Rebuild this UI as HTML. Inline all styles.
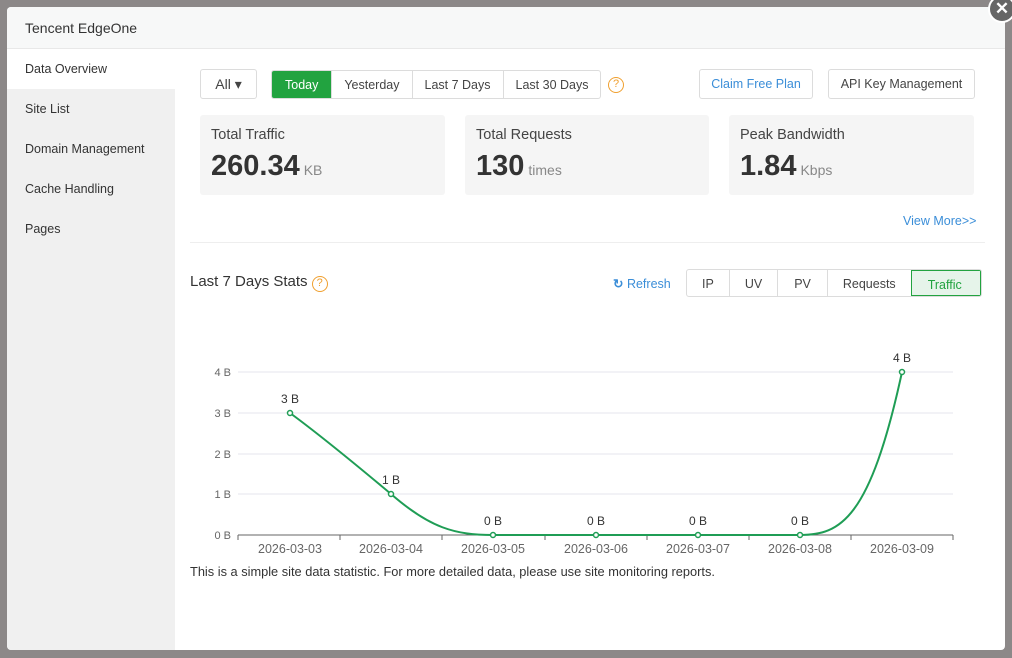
<!DOCTYPE html>
<html><head><meta charset="utf-8"><style>
*{box-sizing:border-box;margin:0;padding:0}
body{width:1012px;height:658px;background:#8c8888;font-family:"Liberation Sans",sans-serif;position:relative;overflow:hidden;color:#333}
.modal{position:absolute;left:7px;top:7px;width:998px;height:643px;background:#fff;border-radius:4px;overflow:hidden}
.hdr{height:42px;background:#f7f8f8;border-bottom:1px solid #e8e8e8;font-size:14px;padding:13px 18px;color:#333}
.side{position:absolute;left:0;top:42px;width:168px;bottom:0;background:#f0f0f0}
.side div{height:40px;line-height:40px;padding-left:18px;font-size:12.5px;color:#333}
.side .act{background:#fff}
.btn{position:absolute;height:30px;border:1px solid #dcdcdc;border-radius:3px;font-size:12.5px;line-height:28px;text-align:center;background:#fff;color:#444}
.seg{position:absolute;display:flex;border:1px solid #dcdcdc;border-radius:3px;height:30px;overflow:hidden}
.seg div{font-size:12.5px;line-height:28px;padding:0 12px;border-left:1px solid #dcdcdc;color:#444}
.seg div:first-child{border-left:none}
.card{position:absolute;top:115px;height:80px;background:#f5f5f5;border-radius:3px;padding:12px 11px}
.card .t{font-size:14.5px;color:#444}
.card .v{font-size:29px;font-weight:bold;color:#333;margin-top:7px}
.card .v span{font-size:14px;font-weight:normal;color:#888;margin-left:4px}
.q{display:inline-block;width:16px;height:16px;border:1.3px solid #f0a030;border-radius:50%;color:#f0a030;font-size:11px;text-align:center;line-height:13px}
</style></head><body>
<div class="modal">
<div class="hdr">Tencent EdgeOne</div>
<div class="side"><div class="act">Data Overview</div><div>Site List</div><div>Domain Management</div><div>Cache Handling</div><div>Pages</div></div>
</div>
<div style="position:absolute;left:988px;top:-5px;width:28px;height:28px;border-radius:50%;background:#666;border:2px solid #fff;color:#fff;font-size:17px;line-height:24px;text-align:center;font-weight:bold">✕</div>
<div class="btn" style="left:200px;top:69px;width:57px;font-size:14px">All ▾</div>
<div class="seg" style="left:271px;top:70px;height:29px">
<div style="background:#22a340;color:#fff;border-color:#22a340;padding:0 13px">Today</div><div>Yesterday</div><div>Last 7 Days</div><div>Last 30 Days</div></div>
<span class="q" style="position:absolute;left:608px;top:77px">?</span>
<div class="btn" style="left:699px;top:69px;width:114px;color:#3b8ed8">Claim Free Plan</div>
<div class="btn" style="left:828px;top:69px;width:147px">API Key Management</div>
<div class="card" style="left:200px;width:245px"><div class="t">Total Traffic</div><div class="v">260.34<span>KB</span></div></div>
<div class="card" style="left:465px;width:244px"><div class="t">Total Requests</div><div class="v">130<span>times</span></div></div>
<div class="card" style="left:729px;width:245px"><div class="t">Peak Bandwidth</div><div class="v">1.84<span>Kbps</span></div></div>
<div style="position:absolute;left:903px;top:214px;font-size:12.5px;color:#3b8ed8">View More&gt;&gt;</div>
<div style="position:absolute;left:190px;top:242px;width:795px;height:1px;background:#eee"></div>
<div style="position:absolute;left:190px;top:273px;font-size:15px;color:#333">Last 7 Days Stats <span class="q" style="vertical-align:0px">?</span></div>
<div style="position:absolute;left:613px;top:276px;font-size:12.5px;color:#3b8ed8"><span style="font-weight:bold">↻</span> Refresh</div>
<div class="seg" style="left:686px;top:269px;height:28px;">
<div style="padding:0 15px">IP</div><div style="padding:0 15px">UV</div><div style="padding:0 16px">PV</div><div style="padding:0 15px">Requests</div><div style="background:#e6f4ea;color:#22a340;border:1px solid #22a340;padding:0 16px;width:70px">Traffic</div></div>
<svg style="position:absolute;left:0;top:0" width="1012" height="658" font-family="Liberation Sans,sans-serif" font-size="11">
<g stroke="#e4e6ee"><line x1="238" y1="372" x2="953" y2="372"/><line x1="238" y1="413" x2="953" y2="413"/><line x1="238" y1="454" x2="953" y2="454"/><line x1="238" y1="494" x2="953" y2="494"/></g>
<line x1="238" y1="535" x2="953" y2="535" stroke="#666"/>
<g stroke="#666"><line x1="238" y1="535" x2="238" y2="540"/><line x1="340" y1="535" x2="340" y2="540"/><line x1="442" y1="535" x2="442" y2="540"/><line x1="545" y1="535" x2="545" y2="540"/><line x1="647" y1="535" x2="647" y2="540"/><line x1="749" y1="535" x2="749" y2="540"/><line x1="851" y1="535" x2="851" y2="540"/><line x1="953" y1="535" x2="953" y2="540"/></g>
<g fill="#666" text-anchor="end"><text x="231" y="376">4 B</text><text x="231" y="417">3 B</text><text x="231" y="458">2 B</text><text x="231" y="498">1 B</text><text x="231" y="539">0 B</text></g>
<g fill="#666" text-anchor="middle" font-size="12.5"><text x="290" y="553">2026-03-03</text><text x="391" y="553">2026-03-04</text><text x="493" y="553">2026-03-05</text><text x="596" y="553">2026-03-06</text><text x="698" y="553">2026-03-07</text><text x="800" y="553">2026-03-08</text><text x="902" y="553">2026-03-09</text></g>
<path d="M290 413 C320 435 360 468 391 494 C430 528 455 535 493 535 L800 535 C840 535 870 520 902 372" fill="none" stroke="#1f9d55" stroke-width="2"/>
<g fill="#fff" stroke="#1f9d55" stroke-width="1.5"><circle cx="290" cy="413" r="2.5"/><circle cx="391" cy="494" r="2.5"/><circle cx="493" cy="535" r="2.5"/><circle cx="596" cy="535" r="2.5"/><circle cx="698" cy="535" r="2.5"/><circle cx="800" cy="535" r="2.5"/><circle cx="902" cy="372" r="2.5"/></g>
<g fill="#333" text-anchor="middle" font-size="12"><text x="290" y="403">3 B</text><text x="391" y="484">1 B</text><text x="493" y="525">0 B</text><text x="596" y="525">0 B</text><text x="698" y="525">0 B</text><text x="800" y="525">0 B</text><text x="902" y="362">4 B</text></g>
<text x="190" y="576" fill="#333" font-size="12.8">This is a simple site data statistic. For more detailed data, please use site monitoring reports.</text>
</svg>
</body></html>
